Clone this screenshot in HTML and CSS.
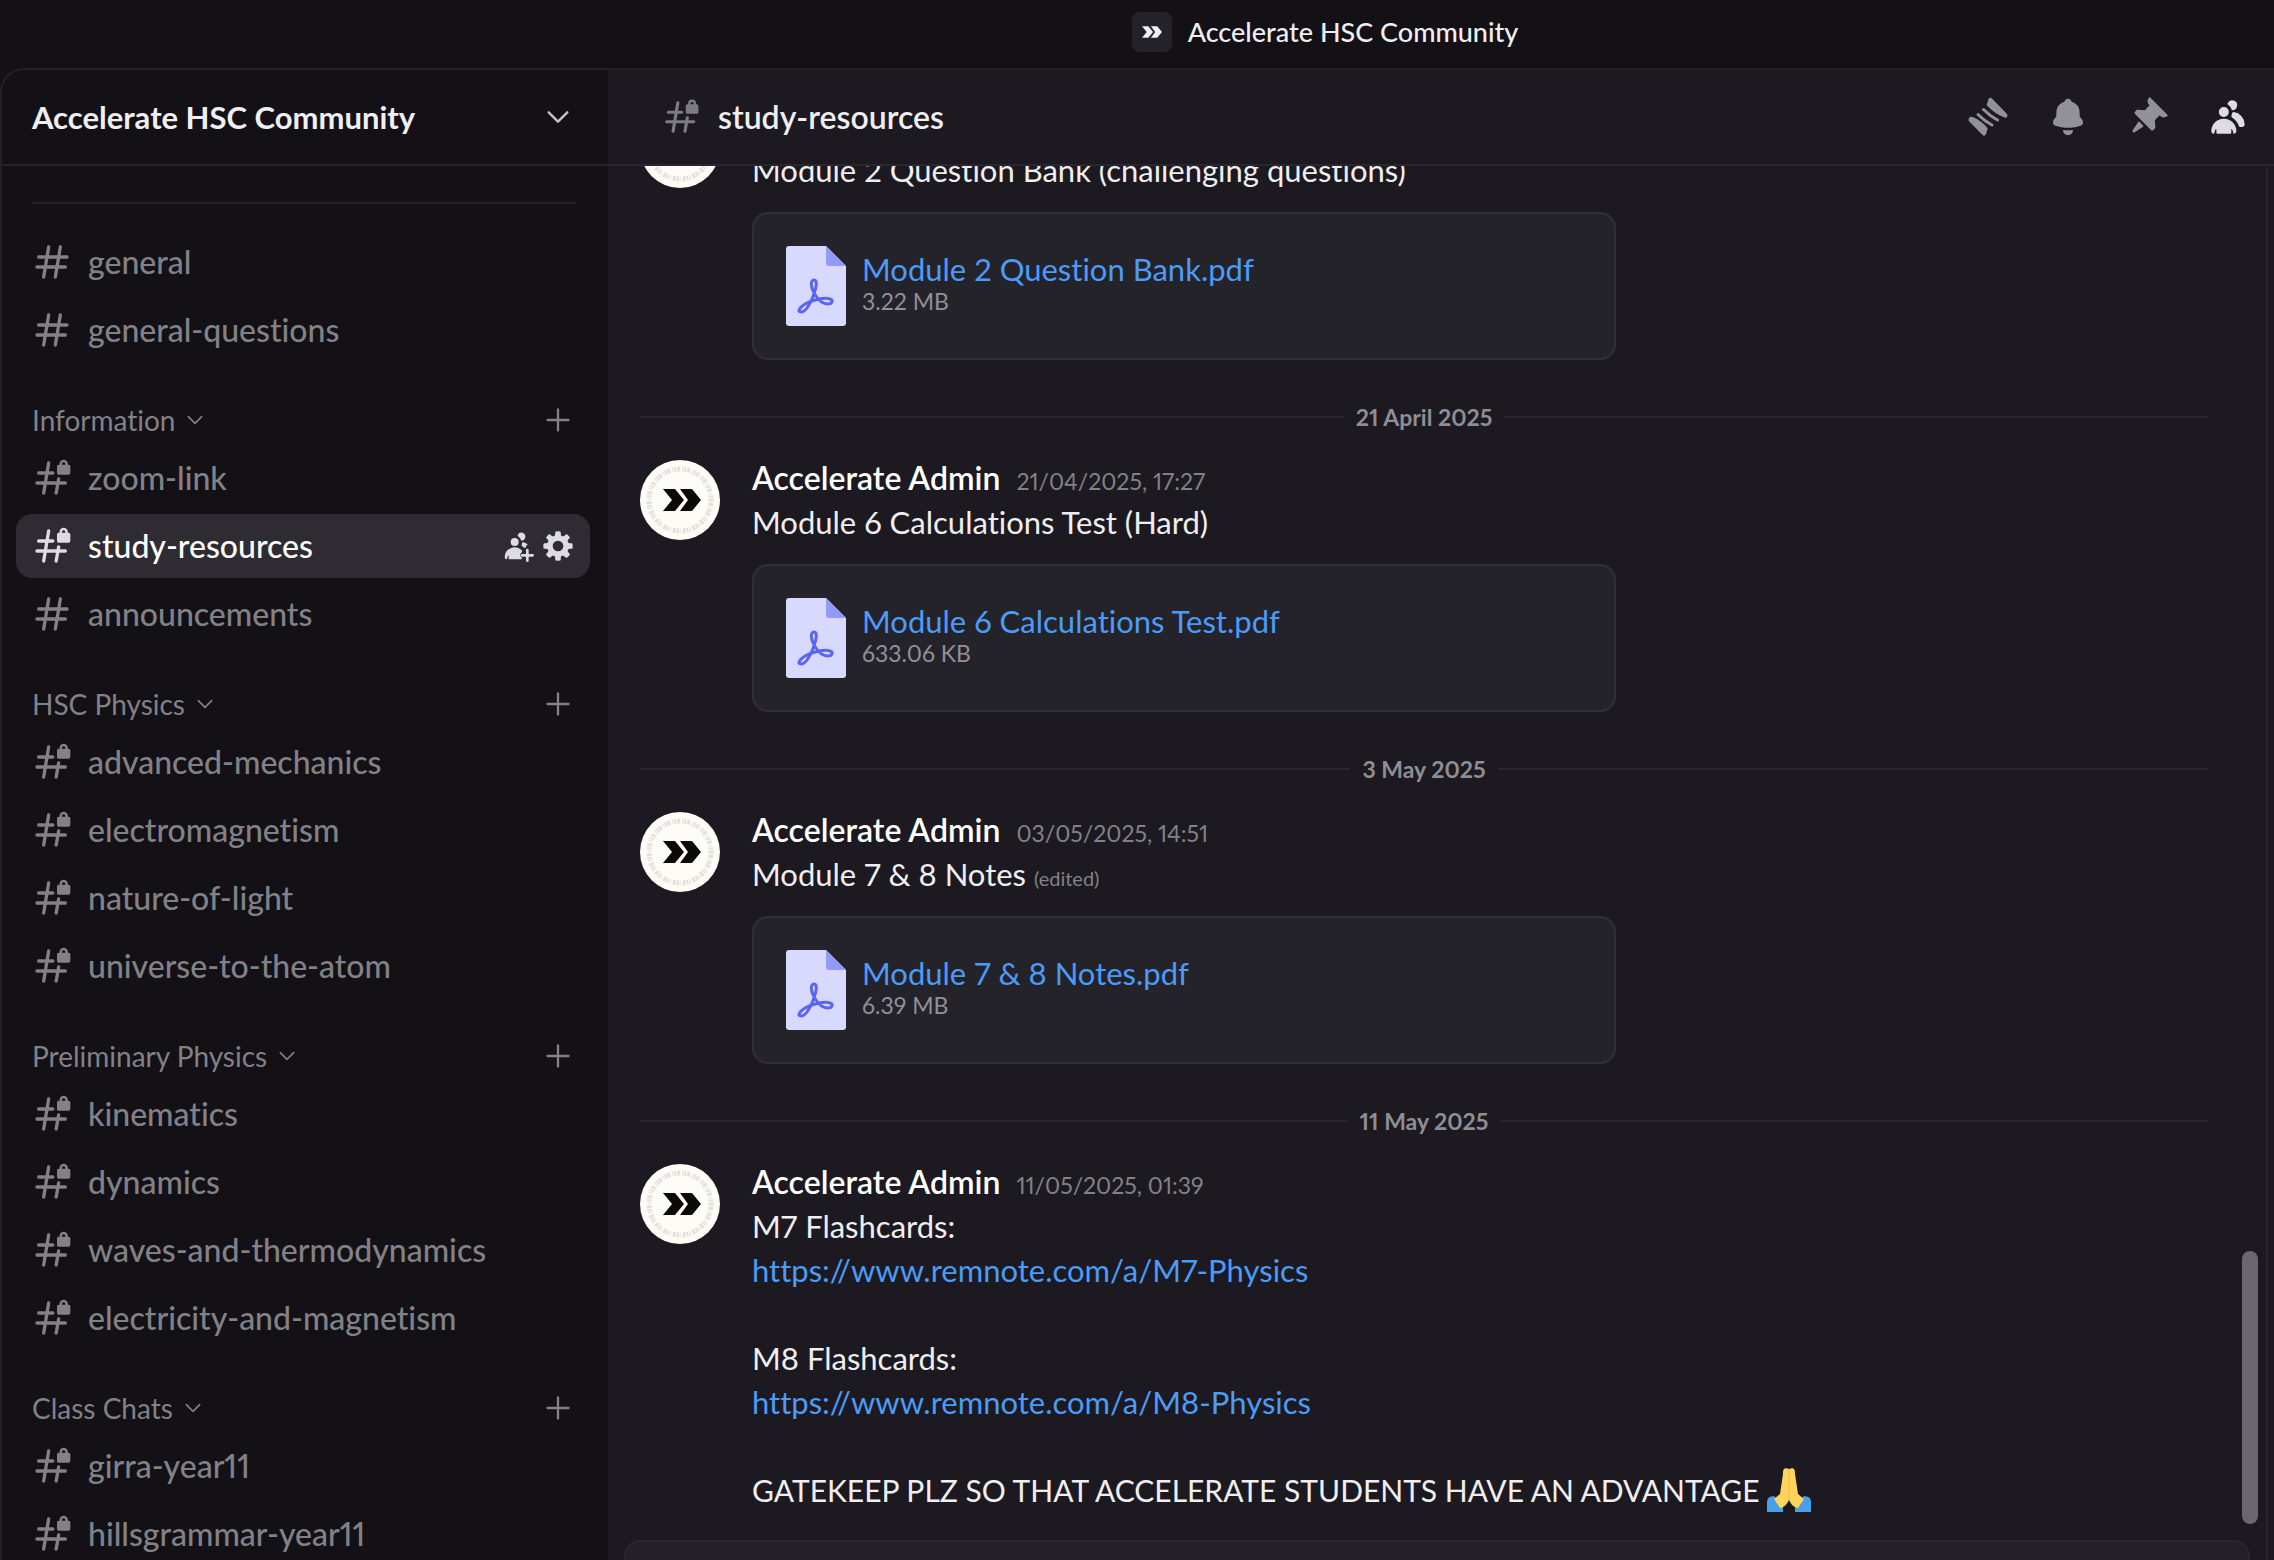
FILE: index.html
```
<!DOCTYPE html>
<html lang="en">
<head>
    <meta charset="UTF-8">
    <meta name="viewport" content="width=device-width, initial-scale=1.0">
    <title>Accelerate HSC Community</title>
    <link rel="stylesheet" href="styles.css">
</head>
<body>
    <svg class="sprite" aria-hidden="true">
        <symbol id="hash" viewBox="0 0 24 24">
            <path fill="none" stroke="currentColor" stroke-width="2" stroke-linecap="round" d="M10 3 7 21M17 3l-3 18M4 9h17M3 15h17"/>
        </symbol>
        <symbol id="hash-lock" viewBox="0 0 24 24">
            <path fill="none" stroke="currentColor" stroke-width="2" stroke-linecap="round" d="M10 3 7 21M16 12.500l-1.500 8.500M4 9h8.500M3 15h17"/>
            <path fill="currentColor" fill-rule="evenodd" d="M16 4h.5v-.5a2.500 2.500 0 0 1 5 0V4h.5a1 1 0 0 1 1 1v4a1 1 0 0 1-1 1h-6a1 1 0 0 1-1-1V5a1 1 0 0 1 1-1Zm4-.5V4h-2v-.5a1 1 0 1 1 2 0Z"/>
        </symbol>
        <symbol id="chevron" viewBox="0 0 24 24">
            <path fill="none" stroke="currentColor" stroke-width="2" stroke-linecap="round" stroke-linejoin="round" d="m4 8 8 8 8-8"/>
        </symbol>
        <symbol id="plus" viewBox="0 0 24 24">
            <path fill="none" stroke="currentColor" stroke-width="2" stroke-linecap="round" d="M12 3v18M3 12h18"/>
        </symbol>
        <symbol id="double-arrow" viewBox="0 0 38 22">
            <path fill="currentColor" d="M0 0h12l9 11-9 11H0l9-11ZM17 0h12l9 11-9 11H17l8-11Z"/>
        </symbol>
        <symbol id="logo" viewBox="0 0 80 80">
            <circle cx="40" cy="40" r="40" fill="#fdfcf7"/>
            <circle cx="40" cy="40" r="31" fill="none" stroke="#e3e1db" stroke-width="5" stroke-dasharray="2 1 3 2 1 1"/>
            <path fill="#0b0a08" d="M23 29h12l9 11-9 11H23l9-11ZM40 29h12l9 11-9 11H40l8-11Z"/>
        </symbol>
        <symbol id="bell" viewBox="0 0 24 24">
            <path fill="currentColor" d="M9.700 2.890c.18-.07.32-.24.37-.43a2 2 0 0 1 3.860 0c.05.2.19.36.38.43A7 7 0 0 1 19 9.500v2.090c0 .12.05.24.13.33l1.100 1.220a3 3 0 0 1 .77 2.010v.28c0 .67-.34 1.290-.95 1.560-1.310.6-4 1.510-8.050 1.510-4.050 0-6.740-.91-8.050-1.500-.61-.28-.95-.9-.95-1.570v-.28a3 3 0 0 1 .77-2l1.100-1.230a.5.5 0 0 0 .13-.33V9.500a7 7 0 0 1 4.700-6.610ZM9.180 19.840A.16.16 0 0 0 9 20a3 3 0 1 0 6 0c0-.1-.09-.17-.18-.16a24.860 24.860 0 0 1-5.640 0Z"/>
        </symbol>
        <symbol id="pin" viewBox="0 0 24 24">
            <path fill="currentColor" d="M19.380 11.380a3 3 0 0 0 4.240 0l.03-.03a.5.5 0 0 0 0-.7L13.350.35a.5.5 0 0 0-.7 0l-.03.03a3 3 0 0 0 0 4.240L13 5l-2.920 2.920-3.650-.34a2 2 0 0 0-1.600.58l-.62.63a1 1 0 0 0 0 1.420l9.580 9.580a1 1 0 0 0 1.420 0l.63-.63a2 2 0 0 0 .58-1.600l-.34-3.640L19 11l.38.38ZM9.070 17.070a.5.5 0 0 1-.08.77l-5.150 3.430a.5.5 0 0 1-.63-.06l-.42-.42a.5.5 0 0 1-.06-.63L6.160 15a.5.5 0 0 1 .77-.08l2.140 2.140Z"/>
        </symbol>
        <symbol id="members" viewBox="0 0 24 24">
            <path fill="currentColor" d="M14.500 8a3 3 0 1 0-2.700-4.300c-.2.4.06.86.44 1.120a5 5 0 0 1 2.140 3.080c.01.06.06.1.12.1ZM18.440 17.270c.15.43.54.73 1 .73h1.060c.83 0 1.500-.67 1.500-1.500a7.500 7.500 0 0 0-6.500-7.430c-.55-.08-.99.38-1.100.92-.06.3-.15.6-.26.87-.23.58-.05 1.300.47 1.630a9.530 9.530 0 0 1 3.830 4.780ZM12.500 9a3 3 0 1 1-6 0 3 3 0 0 1 6 0ZM2 20.500a7.500 7.500 0 0 1 15 0c0 .83-.67 1.500-1.500 1.500a.2.2 0 0 1-.2-.16c-.2-.96-.56-1.870-.88-2.540-.1-.23-.42-.15-.42.1v2.100a.5.5 0 0 1-.5.5h-8a.5.5 0 0 1-.5-.5v-2.100c0-.25-.31-.33-.42-.1-.32.67-.67 1.580-.88 2.540a.2.2 0 0 1-.2.16A1.500 1.500 0 0 1 2 20.500Z"/>
        </symbol>
        <symbol id="invite" viewBox="0 0 24 24">
            <path fill="currentColor" d="M14.500 8a3 3 0 1 0-2.700-4.300c-.2.4.06.86.44 1.120a5 5 0 0 1 2.140 3.080c.01.06.06.1.12.1ZM15.500 9.100c1.600.2 2.800.8 3.900 1.600-.8.3-1.400 1.200-1.400 2.300 0 .3-1.600.4-2.400-.4-.8-.7-1-1.300-.7-2 .2-.7.1-1.500.6-1.500ZM12.500 9a3 3 0 1 1-6 0 3 3 0 0 1 6 0ZM2 20.500a7.500 7.500 0 0 1 12.600-5.500c1 1 .2 2-.4 2.400-.8.6-1 2.100.1 2.900.5.4.9.8.2 1.500a1 1 0 0 1-1 .2h-8a.5.5 0 0 1-.5-.5v-2.100c0-.25-.31-.33-.42-.1-.32.67-.67 1.580-.88 2.540a.2.2 0 0 1-.2.16A1.500 1.500 0 0 1 2 20.500Z"/>
            <path fill="none" stroke="currentColor" stroke-width="2" stroke-linecap="round" d="M19 15v8M15 19h8"/>
        </symbol>
        <symbol id="gear" viewBox="0 0 24 24">
            <path fill="currentColor" fill-rule="evenodd" d="M10.560 1.100c-.46.05-.7.53-.64.98.18 1.160-.19 2.200-.98 2.530-.8.33-1.790-.15-2.490-1.100-.27-.36-.78-.52-1.140-.24-.77.59-1.450 1.270-2.040 2.040-.28.36-.12.87.24 1.140.96.7 1.430 1.700 1.100 2.490-.33.8-1.370 1.160-2.530.98-.45-.07-.93.18-.99.64a11.100 11.100 0 0 0 0 2.880c.06.46.54.7.99.64 1.160-.18 2.200.19 2.530.98.33.8-.14 1.790-1.100 2.490-.36.27-.52.78-.24 1.140.59.77 1.270 1.450 2.040 2.040.36.28.87.12 1.140-.24.7-.95 1.700-1.430 2.490-1.100.8.33 1.160 1.370.98 2.530-.07.45.18.93.64.99a11.100 11.100 0 0 0 2.880 0c.46-.06.7-.54.64-.99-.18-1.160.19-2.200.98-2.530.8-.33 1.790.14 2.490 1.100.27.36.78.52 1.140.24.77-.59 1.450-1.270 2.040-2.040.28-.36.12-.87-.24-1.140-.96-.7-1.430-1.700-1.100-2.490.33-.8 1.370-1.160 2.530-.98.45.07.93-.18.99-.64a11.100 11.100 0 0 0 0-2.880c-.06-.46-.54-.7-.99-.64-1.160.18-2.200-.19-2.530-.98-.33-.8.14-1.790 1.100-2.490.36-.27.52-.78.24-1.140a11.070 11.070 0 0 0-2.040-2.040c-.36-.28-.87-.12-1.140.24-.7.96-1.700 1.430-2.490 1.100-.8-.33-1.160-1.370-.98-2.530.07-.45-.18-.93-.64-.99a11.100 11.100 0 0 0-2.880 0ZM16 12a4 4 0 1 1-8 0 4 4 0 0 1 8 0Z"/>
        </symbol>
        <symbol id="threads" viewBox="0 0 40 40">
            <path fill="currentColor" d="M20.500 2c1-2 2.500-1.500 3.500-.5l15 15.500c1.500 2-.5 4.500-2.500 3.500-6-2-12-6.500-17-11.500-1.500-1.500-.5-2.500 0-3.500ZM.8 21.500c1-2 3-2 4.500-1.200 5 2 10 6 13.700 10.200 1 1.500.5 2-.2 3.500l-.8 3c-.5 2-2.500 2-3.500 1L1.300 24.500c-.8-1-1-1.800-.5-3Z"/>
            <path fill="none" stroke="currentColor" stroke-width="3" stroke-linecap="round" d="M15.500 12.500c4.500 4.500 9 8 14 10.500M10 17.500c4.500 4.500 9 8 14 10.500"/>
        </symbol>
        <symbol id="pdf" viewBox="0 0 60 80">
            <path fill="#d9d8ff" d="M3 0h37l20 20v57a3 3 0 0 1-3 3H3a3 3 0 0 1-3-3V3a3 3 0 0 1 3-3Z"/>
            <path fill="#939bf9" d="m40 0 20 20H43a3 3 0 0 1-3-3Z"/>
            <path fill="none" stroke="#5865f2" stroke-width="3" d="M28 34c-4 0-3 8 0 13 4 7 9 11 14 11 4 0 6-4 2-5-6-2-18 1-25 5-6 4-8 8-4 8 5 0 10-10 13-18 2-6 4-14 0-14Z"/>
        </symbol>
        <symbol id="pray" viewBox="0 0 44 44">
            <path fill="#4a9fe8" d="M0 44V34q0-6 7-6l9 9v7ZM44 44V34q0-6-7-6l-9 9v7Z"/>
            <path fill="#ffd45c" d="M22 1c-5-2-6 0-6 5l-3 20-6 5 6 9c5-1 7-4 9-8 2 4 4 7 9 8l6-9-6-5-3-20c0-5-1-7-6-5Z"/>
            <path fill="none" stroke="#f0b943" stroke-width="1" d="M22 2v30"/>
        </symbol>
    </svg>

    <header class="titlebar">
        <span class="server-icon"><svg><use href="#double-arrow"/></svg></span>
        <span>Accelerate HSC Community</span>
    </header>

    <div class="app">
        <nav class="sidebar">
            <button class="server-name" type="button">Accelerate HSC Community <svg><use href="#chevron"/></svg></button>
            <div class="channels">
                <hr>
                <a class="channel" href="#"><svg><use href="#hash"/></svg>general</a>
                <a class="channel" href="#"><svg><use href="#hash"/></svg>general-questions</a>

                <div class="category">
                    <button type="button">Information <svg><use href="#chevron"/></svg></button>
                    <button type="button" aria-label="Create channel"><svg class="add"><use href="#plus"/></svg></button>
                </div>
                <a class="channel" href="#"><svg><use href="#hash-lock"/></svg>zoom-link</a>
                <div class="channel active">
                    <a href="#"><svg><use href="#hash-lock"/></svg>study-resources</a>
                    <button type="button" aria-label="Invite"><svg><use href="#invite"/></svg></button>
                    <button type="button" aria-label="Edit channel"><svg><use href="#gear"/></svg></button>
                </div>
                <a class="channel" href="#"><svg><use href="#hash"/></svg>announcements</a>

                <div class="category">
                    <button type="button">HSC Physics <svg><use href="#chevron"/></svg></button>
                    <button type="button" aria-label="Create channel"><svg class="add"><use href="#plus"/></svg></button>
                </div>
                <a class="channel" href="#"><svg><use href="#hash-lock"/></svg>advanced-mechanics</a>
                <a class="channel" href="#"><svg><use href="#hash-lock"/></svg>electromagnetism</a>
                <a class="channel" href="#"><svg><use href="#hash-lock"/></svg>nature-of-light</a>
                <a class="channel" href="#"><svg><use href="#hash-lock"/></svg>universe-to-the-atom</a>

                <div class="category">
                    <button type="button">Preliminary Physics <svg><use href="#chevron"/></svg></button>
                    <button type="button" aria-label="Create channel"><svg class="add"><use href="#plus"/></svg></button>
                </div>
                <a class="channel" href="#"><svg><use href="#hash-lock"/></svg>kinematics</a>
                <a class="channel" href="#"><svg><use href="#hash-lock"/></svg>dynamics</a>
                <a class="channel" href="#"><svg><use href="#hash-lock"/></svg>waves-and-thermodynamics</a>
                <a class="channel" href="#"><svg><use href="#hash-lock"/></svg>electricity-and-magnetism</a>

                <div class="category">
                    <button type="button">Class Chats <svg><use href="#chevron"/></svg></button>
                    <button type="button" aria-label="Create channel"><svg class="add"><use href="#plus"/></svg></button>
                </div>
                <a class="channel" href="#"><svg><use href="#hash-lock"/></svg>girra-year11</a>
                <a class="channel" href="#"><svg><use href="#hash-lock"/></svg>hillsgrammar-year11</a>
            </div>
        </nav>

        <main class="chat">
            <header class="chat-header">
                <svg class="hash"><use href="#hash-lock"/></svg>
                <h1>study-resources</h1>
                <div class="toolbar">
                    <button type="button" aria-label="Threads"><svg><use href="#threads"/></svg></button>
                    <button type="button" aria-label="Notifications"><svg><use href="#bell"/></svg></button>
                    <button type="button" aria-label="Pinned messages"><svg><use href="#pin"/></svg></button>
                    <button type="button" aria-label="Members" class="on"><svg><use href="#members"/></svg></button>
                </div>
            </header>

            <div class="chat-body">
                <div class="messages">
                    <article class="message">
                        <svg class="avatar"><use href="#logo"/></svg>
                        <div class="content scrolled">
                            <p>Module 2 Question Bank (challenging questions)</p>
                            <div class="file">
                                <svg><use href="#pdf"/></svg>
                                <div>
                                    <a href="#">Module 2 Question Bank.pdf</a>
                                    <small>3.22 MB</small>
                                </div>
                            </div>
                        </div>
                    </article>

                    <div class="date">21 April 2025</div>
                    <article class="message">
                        <svg class="avatar"><use href="#logo"/></svg>
                        <div class="content">
                            <h2>Accelerate Admin <time>21/04/2025, 17:27</time></h2>
                            <p>Module 6 Calculations Test (Hard)</p>
                            <div class="file">
                                <svg><use href="#pdf"/></svg>
                                <div>
                                    <a href="#">Module 6 Calculations Test.pdf</a>
                                    <small>633.06 KB</small>
                                </div>
                            </div>
                        </div>
                    </article>

                    <div class="date">3 May 2025</div>
                    <article class="message">
                        <svg class="avatar"><use href="#logo"/></svg>
                        <div class="content">
                            <h2>Accelerate Admin <time>03/05/2025, 14:51</time></h2>
                            <p>Module 7 &amp; 8 Notes <span class="edited">(edited)</span></p>
                            <div class="file">
                                <svg><use href="#pdf"/></svg>
                                <div>
                                    <a href="#">Module 7 &amp; 8 Notes.pdf</a>
                                    <small>6.39 MB</small>
                                </div>
                            </div>
                        </div>
                    </article>

                    <div class="date">11 May 2025</div>
                    <article class="message">
                        <svg class="avatar"><use href="#logo"/></svg>
                        <div class="content">
                            <h2>Accelerate Admin <time>11/05/2025, 01:39</time></h2>
                            <p>
                                M7 Flashcards:<br>
                                <a href="#">https://www.remnote.com/a/M7-Physics</a><br>
                                <br>
                                M8 Flashcards:<br>
                                <a href="#">https://www.remnote.com/a/M8-Physics</a><br>
                                <br>
                            </p>
                            <p class="caps">GATEKEEP PLZ SO THAT ACCELERATE STUDENTS HAVE AN ADVANTAGE <svg class="emoji" role="img" aria-label="folded hands"><use href="#pray"/></svg></p>
                        </div>
                    </article>
                    <div class="scroll-thumb"></div>
                </div>
                <form class="composer"><input type="text" aria-label="Message #study-resources"></form>
            </div>
        </main>
    </div>
</body>
</html>
```
FILE: styles.css
```
* {
    box-sizing: border-box;
}
body {
    margin: 0;
    height: 100vh;
    display: flex;
    flex-direction: column;
    overflow: hidden;
    font-family: Lato, sans-serif;
    font-size: 31px;
    line-height: 44px;
    font-variant-ligatures: none;
    font-variant-numeric: proportional-nums;
    color: #efeef2;
    background-color: #131116;
}
svg {
    display: block;
    flex: none;
}
button {
    display: flex;
    align-items: center;
    padding: 0;
    border: none;
    background: none;
    font: inherit;
    color: inherit;
    cursor: pointer;
}
a {
    color: #4b9bf8;
    text-decoration: none;
}
h1, h2, p {
    margin: 0;
}
h1, h2 {
    font-size: 32px;
    font-weight: 600;
}
.sprite {
    display: none;
}

.titlebar {
    flex: 0 0 68px;
    display: flex;
    align-items: center;
    justify-content: center;
    gap: 16px;
    padding: 0 0 4px 376px;
    font-size: 27px;
    font-weight: 500;
}
.server-icon {
    display: flex;
    align-items: center;
    justify-content: center;
    width: 40px;
    height: 40px;
    border-radius: 8px;
    background-color: #242329;
}
.server-icon svg {
    width: 20px;
    height: 12px;
}

.app {
    flex: 1;
    min-height: 0;
    display: flex;
    border-top: 2px solid #222026;
    border-left: 2px solid #222026;
    border-top-left-radius: 24px;
    overflow: hidden;
}

/* Sidebar */
.sidebar {
    flex: 0 0 606px;
    display: flex;
    flex-direction: column;
    overflow: hidden;
}
.server-name {
    flex: 0 0 96px;
    justify-content: space-between;
    padding: 0 36px 0 30px;
    border-bottom: 2px solid #26242a;
    font-weight: 700;
}
.server-name svg {
    width: 28px;
    height: 28px;
    color: #c5c4ca;
}
.channels {
    padding: 36px 18px 0 14px;
}
.channels hr {
    height: 2px;
    margin: 0 14px 26px 16px;
    border: none;
    background-color: #242228;
}
.channel {
    display: flex;
    align-items: center;
    height: 64px;
    margin: 2px 0 4px;
    padding: 0 16px;
    border-radius: 16px;
    color: #828187;
    font-size: 32px;
    font-weight: 500;
}
.channel + .channel {
    margin-top: 0;
}
.channel svg {
    width: 40px;
    height: 40px;
    margin-right: 16px;
}
.channel.active {
    background-color: #2e2c32;
    color: #dddce2;
}
.channel.active a {
    flex: 1;
    display: flex;
    align-items: center;
    color: #fff;
}
.channel.active a svg {
    color: #dddce2;
}
.channel.active button svg {
    width: 32px;
    height: 32px;
    margin: 0 0 0 8px;
}
.category {
    display: flex;
    align-items: center;
    justify-content: space-between;
    padding: 30px 18px 0 16px;
    font-size: 28px;
    line-height: 48px;
    color: #828187;
}
.category svg {
    width: 20px;
    height: 20px;
    margin-left: 10px;
}
.category .add {
    width: 28px;
    height: 28px;
}

/* Chat */
.chat {
    flex: 1;
    min-width: 0;
    display: flex;
    flex-direction: column;
    background-color: #1c1a20;
}
.chat-header {
    flex: 0 0 96px;
    display: flex;
    align-items: center;
    padding: 0 26px 0 54px;
    border-bottom: 2px solid #29272d;
}
.chat-header .hash {
    width: 38px;
    height: 38px;
    margin-right: 18px;
    color: #7d7c83;
}
.toolbar {
    display: flex;
    gap: 40px;
    margin-left: auto;
    color: #929197;
}
.toolbar svg {
    width: 40px;
    height: 40px;
}
.toolbar .on {
    color: #dddce2;
}
.chat-body {
    flex: 1;
    min-height: 0;
    display: flex;
    flex-direction: column;
    margin-right: 6px;
    border-right: 2px solid #26242a;
}
.messages {
    position: relative;
    flex: 1;
    min-height: 0;
    display: flex;
    flex-direction: column;
    justify-content: flex-end;
    padding: 0 58px 28px 32px;
    overflow: hidden;
}
.message {
    display: flex;
    gap: 32px;
}
.avatar {
    width: 80px;
    height: 80px;
    margin-top: 4px;
}
.content {
    flex: 1;
    min-width: 0;
}
/* the author line has scrolled out of view */
.content.scrolled {
    padding-top: 44px;
}
.content h2 {
    color: #fff;
}
.content time {
    margin-left: 8px;
    font-size: 23px;
    line-height: 1;
    font-weight: 400;
    color: #828187;
}
.content .caps {
    font-size: 30px;
}
.edited {
    font-size: 20px;
    line-height: 1;
    color: #828187;
}
.emoji {
    display: inline-block;
    width: 44px;
    height: 44px;
    vertical-align: top;
}
.file {
    display: flex;
    align-items: center;
    gap: 16px;
    max-width: 864px;
    height: 148px;
    margin-top: 20px;
    padding: 0 32px;
    border: 2px solid #323037;
    border-radius: 16px;
    background-color: #25232a;
}
.file svg {
    width: 60px;
    height: 80px;
}
.file a, .file small {
    display: block;
    line-height: 32px;
}
.file small {
    padding-bottom: 2px;
    font-size: 23px;
    color: #928f98;
}
.date {
    display: flex;
    align-items: center;
    gap: 12px;
    margin: 44px 0 26px;
    font-size: 23px;
    line-height: 26px;
    font-weight: 700;
    color: #8f8e95;
}
.date::before, .date::after {
    content: "";
    flex: 1;
    height: 2px;
    background-color: #29272d;
}
.scroll-thumb {
    position: absolute;
    right: 8px;
    bottom: 16px;
    width: 16px;
    height: 273px;
    border-radius: 8px;
    background-color: #6a6771;
}
.composer {
    flex: 0 0 20px;
    margin: 0 16px;
    overflow: hidden;
}
.composer input {
    width: 100%;
    height: 112px;
    border: 2px solid #29272d;
    border-radius: 16px;
    background-color: #232127;
    color: inherit;
    font: inherit;
}
```
